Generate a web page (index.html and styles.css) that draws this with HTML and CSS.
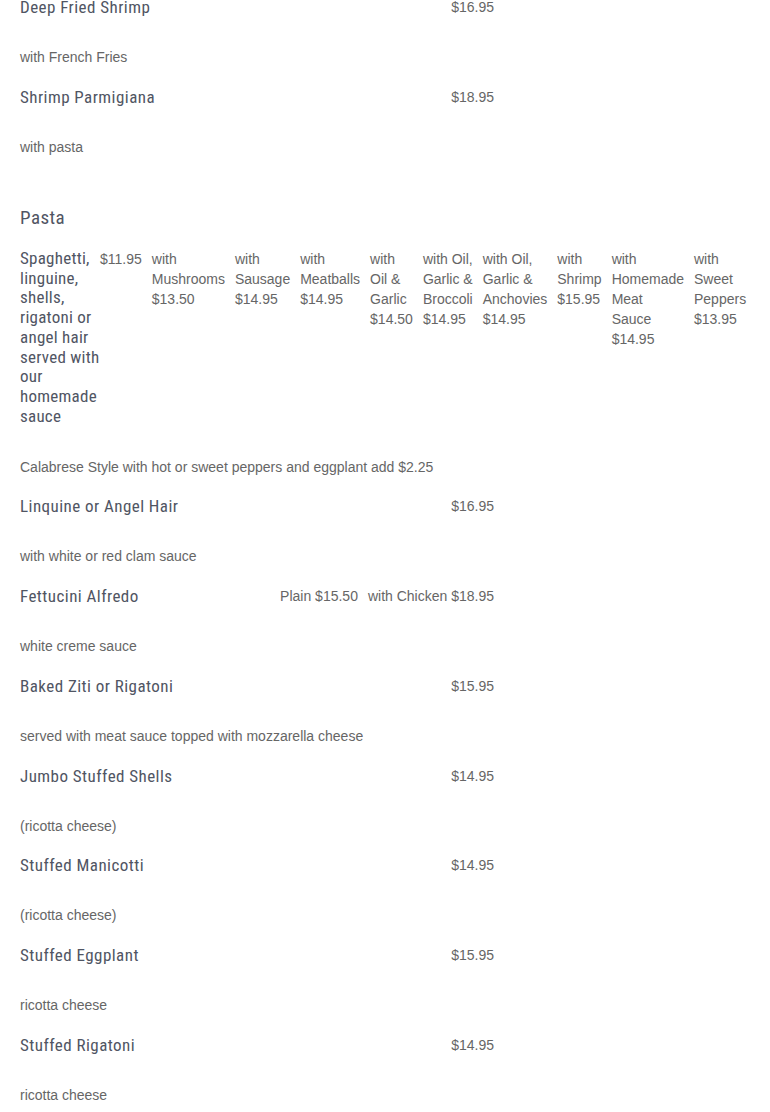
FILE: index.html
```html
<!DOCTYPE html>
<html>
<head>
<meta charset="utf-8">
<link rel="stylesheet" href="styles.css">
</head>
<body>
<div class="menu">
  <div class="item">
    <div class="head"><span class="title">Deep Fried Shrimp</span><div class="prices"><span>$16.95</span></div></div>
    <div class="desc">with French Fries</div>
  </div>
  <div class="item">
    <div class="head"><span class="title">Shrimp Parmigiana</span><div class="prices"><span>$18.95</span></div></div>
    <div class="desc">with pasta</div>
  </div>

  <h2 class="section">Pasta</h2>

  <div class="item">
    <div class="pasta-row">
      <span class="title pasta-title">Spaghetti, linguine, shells, rigatoni or angel hair served with our homemade sauce</span>
      <span class="opt first">$11.95</span>
      <span class="opt">with Mushrooms $13.50</span>
      <span class="opt">with Sausage $14.95</span>
      <span class="opt">with Meatballs $14.95</span>
      <span class="opt">with Oil &amp; Garlic $14.50</span>
      <span class="opt">with Oil, Garlic &amp; Broccoli $14.95</span>
      <span class="opt">with Oil, Garlic &amp; Anchovies $14.95</span>
      <span class="opt">with Shrimp $15.95</span>
      <span class="opt">with Homemade Meat Sauce $14.95</span>
      <span class="opt">with Sweet Peppers $13.95</span>
    </div>
    <div class="desc">Calabrese Style with hot or sweet peppers and eggplant add $2.25</div>
  </div>

  <div class="item">
    <div class="head"><span class="title">Linquine or Angel Hair</span><div class="prices"><span>$16.95</span></div></div>
    <div class="desc">with white or red clam sauce</div>
  </div>
  <div class="item">
    <div class="head"><span class="title">Fettucini Alfredo</span><div class="prices"><span>Plain $15.50</span><span>with Chicken $18.95</span></div></div>
    <div class="desc">white creme sauce</div>
  </div>
  <div class="item">
    <div class="head"><span class="title">Baked Ziti or Rigatoni</span><div class="prices"><span>$15.95</span></div></div>
    <div class="desc">served with meat sauce topped with mozzarella cheese</div>
  </div>
  <div class="item">
    <div class="head"><span class="title">Jumbo Stuffed Shells</span><div class="prices"><span>$14.95</span></div></div>
    <div class="desc">(ricotta cheese)</div>
  </div>
  <div class="item">
    <div class="head"><span class="title">Stuffed Manicotti</span><div class="prices"><span>$14.95</span></div></div>
    <div class="desc">(ricotta cheese)</div>
  </div>
  <div class="item">
    <div class="head"><span class="title">Stuffed Eggplant</span><div class="prices"><span>$15.95</span></div></div>
    <div class="desc">ricotta cheese</div>
  </div>
  <div class="item">
    <div class="head"><span class="title">Stuffed Rigatoni</span><div class="prices"><span>$14.95</span></div></div>
    <div class="desc">ricotta cheese</div>
  </div>
</div>
</body>
</html>
```

FILE: styles.css
```css
html, body {
  margin: 0;
  padding: 0;
  background: #ffffff;
  overflow: hidden;
}

body {
  font-family: "Liberation Sans", Arial, sans-serif;
  font-size: 14px;
  color: #666666;
}

.menu {
  width: 474px;
  margin-left: 20px;
  margin-top: -3px;
}

.item {
  margin-bottom: 19.75px;
}

.head {
  display: flex;
  align-items: center;
  justify-content: space-between;
  height: 20px;
}

.title {
  font-family: "Roboto", "Liberation Sans", sans-serif;
  font-stretch: condensed;
  font-weight: 400;
  font-size: 17px;
  letter-spacing: 0.45px;
  color: #505563;
  line-height: 20px;
  white-space: nowrap;
}

.prices {
  display: flex;
  gap: 10px;
  line-height: 20px;
  color: #666666;
}

.desc {
  margin-top: 30px;
  line-height: 20px;
  color: #666666;
}

.section {
  font-family: "Roboto", "Liberation Sans", sans-serif;
  font-stretch: condensed;
  font-weight: 400;
  font-size: 19px;
  letter-spacing: 0.45px;
  line-height: 24px;
  color: #505563;
  margin: 49px 0 19px 0;
}

.pasta-row {
  display: flex;
  align-items: flex-start;
  width: max-content;
}

.pasta-title {
  width: 80px;
  white-space: normal;
  letter-spacing: 0.25px;
  line-height: 19.75px;
}

.opt {
  width: min-content;
  margin-left: 10px;
  line-height: 20px;
}

.opt.first {
  margin-left: 0;
}
```
